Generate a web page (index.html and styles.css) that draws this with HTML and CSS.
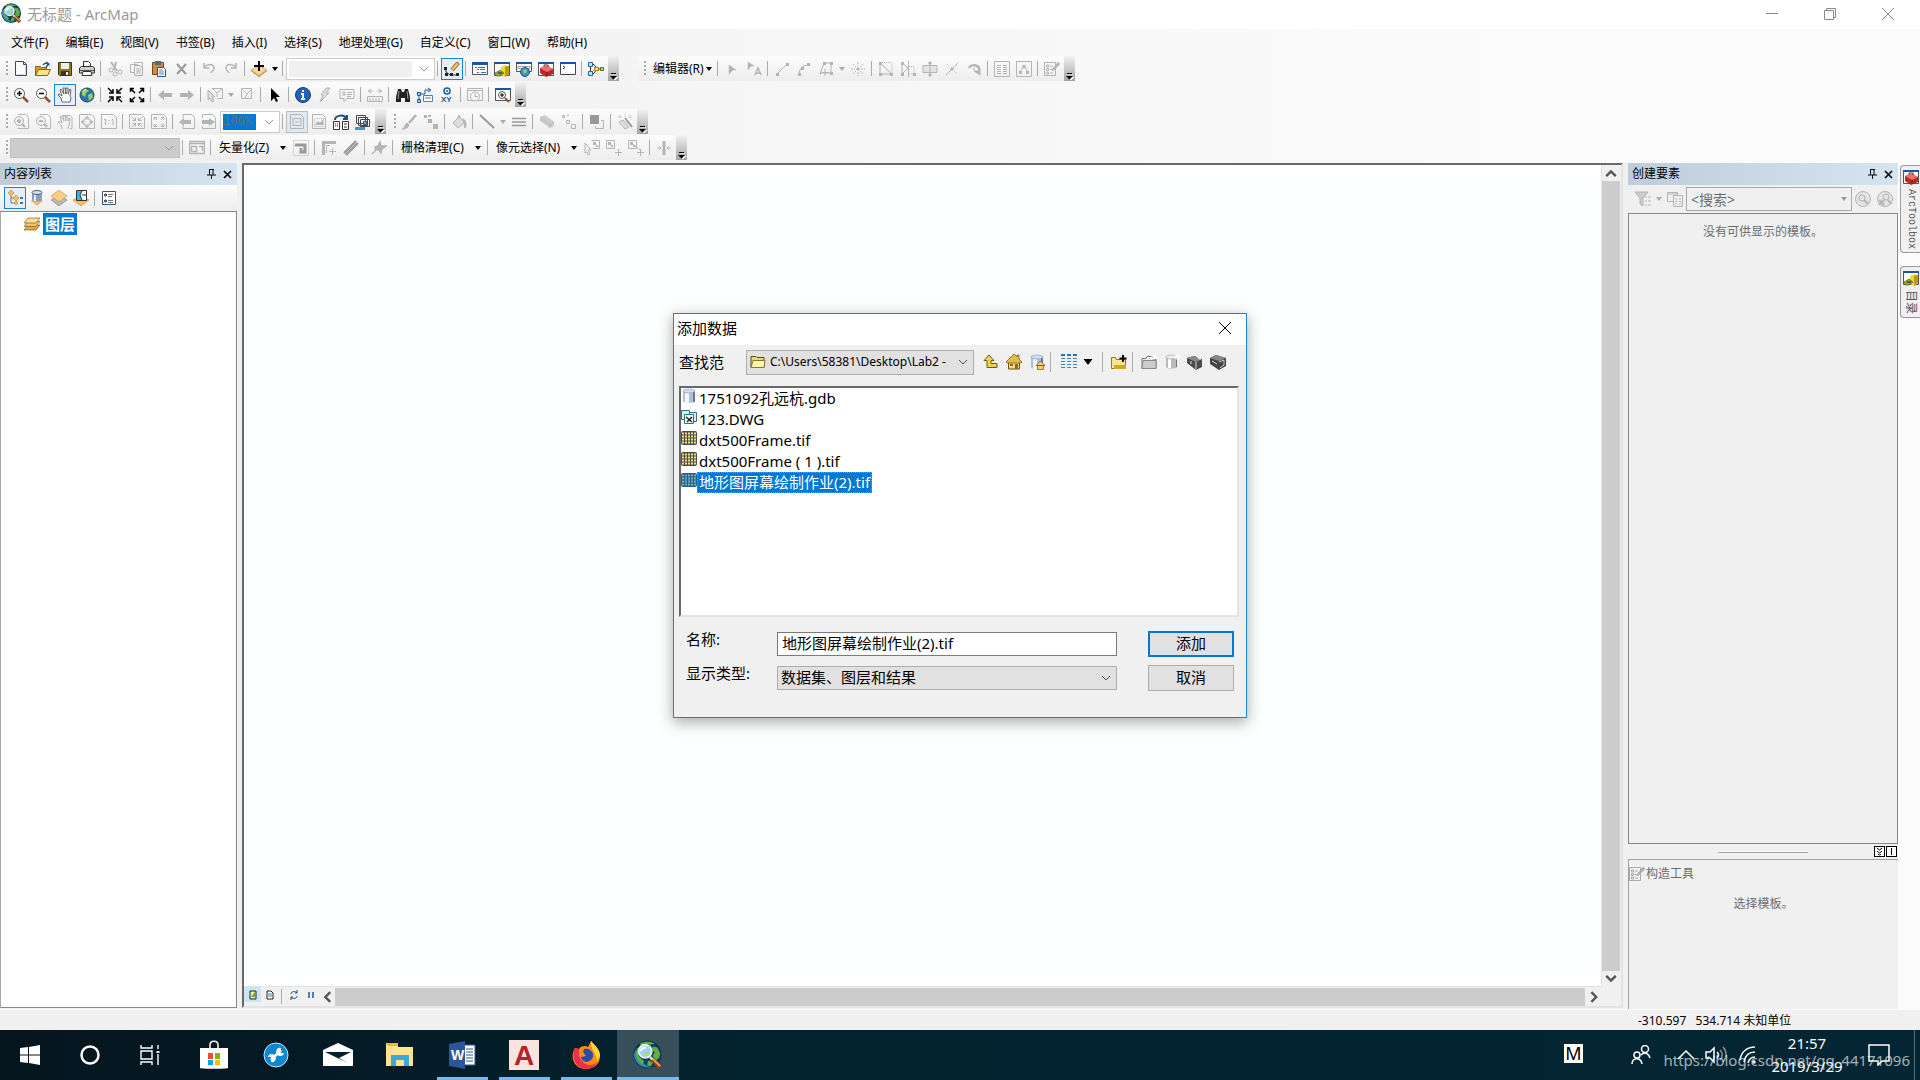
FILE: index.html
```html
<!DOCTYPE html>
<html lang="zh-CN">
<head>
  <meta charset="UTF-8" />
  <meta name="viewport" content="width=device-width, initial-scale=1.0">
  <title>无标题 - ArcMap</title>
  <link rel="stylesheet" href="styles.css">
</head>
<body>
  <!-- 共用图标 -->
  <svg class="defs" width="0" height="0">
    <symbol id="i-arcmap" viewBox="0 0 32 32">
      <circle cx="15.500" cy="15.500" r="15" fill="#123a58"/>
      <path d="M3 10c2 10 8 17 17 19C9 31 1 24 1 15z" fill="#2a86bf"/>
      <path d="M7 4c5-3 12-3 16 0l-4 1-6-1-4 2zM21 7l5 1 3 6-1 5-4 3-3-5 2-4-3-3zM4 9l3-1-1 9 6 6-2 3c-4-2-7-7-7-12zM16 22l6 1-3 5-4-1z" fill="#5fae45"/>
      <circle cx="13" cy="12" r="7" fill="#9cd3ee" stroke="#e9eef0" stroke-width="2"/>
      <path d="M12 14l5-3 1 4-4 3z" fill="#a6d982"/>
      <path d="M8 12c1-3 3-4 6-4" stroke="#fff" stroke-width="2"/>
      <path d="M18 18l4 4" stroke="#d9d9d9" stroke-width="3"/>
      <path d="M21 21l8 8" stroke="#8a3d17" stroke-width="5"/>
      <path d="M21 20l8 8" stroke="#ee9a5c" stroke-width="2"/>
    </symbol>
    <symbol id="i-drop" viewBox="0 0 8 8"><path d="M1 2h6L4 6z" fill="currentColor" stroke="none"/></symbol>
    <symbol id="i-chev" viewBox="0 0 10 10"><path d="M1 3l4 4 4-4" fill="none" stroke="currentColor"/></symbol>
    <symbol id="i-over" viewBox="0 0 11 24"><path d="M4 17.500h5M4 20h6l-3 3z" stroke="#fff" fill="#fff" stroke-width=".5"/><path d="M3 16.500h5" stroke="#000"/><path d="M2 19h7l-3.500 3.500z" fill="#000" stroke="none"/></symbol>
    <symbol id="i-toolbox" viewBox="0 0 16 16">
      <path d="M.5 1.500h15v13H.5z" fill="#fff" stroke="#555"/><path d="M0 1h16v2H0z" fill="#1d55a5"/>
      <path d="M2 7l7-2 6 3v5l-7 3-6-4z" fill="#b92a23"/><path d="M2 7l7-2 6 3-6 3z" fill="#ec7168"/><path d="M6 6V4l4 0v2M9 11v4" stroke="#7b1813" fill="none"/>
    </symbol>
    <symbol id="i-catalog" viewBox="0 0 16 16">
      <path d="M.5 1.500h15v13H.5z" fill="#fff" stroke="#555"/><path d="M0 1h16v2H0z" fill="#1d55a5"/>
      <path d="M7 6l4-2 4 1v8l-4 3-4-2z" fill="#f0d935"/><path d="M11 6l4-1v8l-4 3z" fill="#b99a14"/><path d="M1 12l5-3 4 3-4 3H2z" fill="#9aa424" stroke="#4f5712" stroke-width=".6"/><path d="M4 11h4v2H4z" fill="#39617e"/>
    </symbol>
    <symbol id="i-pin" viewBox="0 0 9 10"><path d="M2.500 0v5.500M2 .5h5M6 0v6M0 6h9M4.500 6v4" stroke="#000" fill="none"/></symbol>
    <symbol id="i-x" viewBox="0 0 9 9"><path d="M1 1l7 7M8 1L1 8" stroke="#000" stroke-width="1.600"/></symbol>
    <symbol id="i-form" viewBox="0 0 16 16"><path d="M.5 1.500h11v13H.5zM2.500 4h2v2h-2zM2.500 7.500h2v2h-2zM2.500 11h2v2h-2zM6 5h3M6 8.500h2M6 12h3"/><path d="M14 1l2 2-6 6-2 1 .500-2z" fill="currentColor" stroke-width=".5"/></symbol>
    <symbol id="i-raster" viewBox="0 0 16 16"><rect y="1" width="16" height="14" rx="2" fill="#4c4c4c"/><path d="M1 3.500h15M1 6.500h15M1 9.500h15M1 12.500h15" stroke="#efe07a" stroke-width="2" stroke-dasharray="2 1"/></symbol>
    <symbol id="i-cyl" viewBox="0 0 16 16"><path d="M2 3v10c0 2.500 12 2.500 12 0V3z" fill="#b5bfd2"/><path d="M4 5v9.500l4 .500V5z" fill="#f3f6fb"/><path d="M12 4v10.500l2-1V3z" fill="#66779a"/><ellipse cx="8" cy="3" rx="6" ry="2" fill="#cfdcf3" stroke="#8495b3" stroke-width=".6"/></symbol>
  </svg>

  <header class="titlebar">
    <svg class="app-icon"><use href="#i-arcmap"/></svg>
    <span class="title">无标题 - ArcMap</span>
    <button class="win-btn" aria-label="最小化"><svg viewBox="0 0 12 12"><path d="M0 5.500h12"/></svg></button>
    <button class="win-btn" aria-label="还原"><svg viewBox="0 0 12 12"><path d="M.5 2.500h9v9h-9zM2.500 2V.5h9v9H10"/></svg></button>
    <button class="win-btn" aria-label="关闭"><svg viewBox="0 0 12 12"><path d="M0 0l12 12M12 0L0 12"/></svg></button>
  </header>

  <div class="bars">
    <nav class="menu">
      <button>文件(F)</button><button>编辑(E)</button><button>视图(V)</button><button>书签(B)</button><button>插入(I)</button><button>选择(S)</button><button>地理处理(G)</button><button>自定义(C)</button><button>窗口(W)</button><button>帮助(H)</button>
    </nav>

    <!-- 标准工具条 / 编辑器 -->
    <div class="row">
      <div class="toolbar">
        <i class="grip"></i>
        <button class="tool" aria-label="新建"><svg viewBox="0 0 16 16"><path d="M2.500.5h8l3 3v11h-11z" fill="#fff" stroke="#3b4a60"/><path d="M10.500.5v3h3" stroke="#3b4a60"/><path d="M4 13.500h8.500V5" stroke="#c9d6ea"/></svg></button>
        <button class="tool" aria-label="打开"><svg viewBox="0 0 16 16"><path d="M.5 14.500v-9h5l1 1h5v8z" fill="#d99b2a" stroke="#8a6412"/><path d="M.5 14.500l3-6h12l-3 6z" fill="#fbe08d" stroke="#8a6412"/><path d="M8 4c1-2 3-2 5-1M11 1l3 2-3 3" stroke="#155b9c" stroke-width="1.500"/></svg></button>
        <button class="tool" aria-label="保存"><svg viewBox="0 0 16 16"><path d="M1.500 1.500h13v13h-12l-1-1z" fill="#8d7a1b" stroke="#3d350b"/><path d="M4 2h8v6H4z" fill="#eee"/><path d="M4 10h8v4H4z" fill="#333"/><path d="M9 11h2v3H9z" fill="#fff"/></svg></button>
        <button class="tool" aria-label="打印"><svg viewBox="0 0 16 16"><path d="M4.500 6V.5h5l2 2V6" fill="#fff" stroke="#333"/><path d="M.5 7l2-1.500h11l2 1.500v5H.5z" fill="#d0cfc3" stroke="#333"/><path d="M1 9.500h14" stroke="#555"/><path d="M4 10.500h8l1 4H3z" fill="#fff" stroke="#333"/></svg></button>
        <i class="sep"></i>
        <button class="tool" disabled aria-label="剪切"><svg viewBox="0 0 16 16"><path d="M4 1l6 9M9 1L7 9" stroke-width="2"/><circle cx="4" cy="9" r="2"/><circle cx="13" cy="11" r="2"/><circle cx="8" cy="13" r="2"/></svg></button>
        <button class="tool" disabled aria-label="复制"><svg viewBox="0 0 16 16"><path d="M5.500 11.500h-4v-8h7v2M5.500 3V1.500h8v10M5.500 4.500h6l2 3v7h-8zM7 8h5M7 10h5M7 12h5"/></svg></button>
        <button class="tool" aria-label="粘贴"><svg viewBox="0 0 16 16"><path d="M1.500 1.500h11v12h-11z" fill="#cb8a45" stroke="#7a4710"/><path d="M4 0h6v4H4z" fill="#666"/><path d="M6.500 6.500h6l2 2v7h-8z" fill="#fff" stroke="#294f84"/><path d="M8 9h4M8 11h5M8 13h5" stroke="#4e7fbd"/></svg></button>
        <button class="tool" disabled aria-label="删除"><svg viewBox="0 0 16 16"><path d="M4 3l9 10M13 3L4 13" stroke="#999" stroke-width="2"/></svg></button>
        <i class="sep"></i>
        <button class="tool" disabled aria-label="撤消"><svg viewBox="0 0 16 16"><path d="M3 2v5h5M3 7c2-4 10-5 10 0 0 3-3 4-3 5" stroke-width="1.500"/></svg></button>
        <button class="tool" disabled aria-label="恢复"><svg viewBox="0 0 16 16"><path d="M13 2v5H8M13 7c-2-4-10-5-10 0 0 3 3 4 3 5" stroke-width="1.500"/></svg></button>
        <i class="sep"></i>
        <button class="tool" aria-label="添加数据"><svg viewBox="0 0 16 16"><path d="M8 4l8 5-8 6-8-6z" fill="#fbd48b" stroke="#a87522" stroke-width=".5"/><path d="M0 9l8 6 8-6v1l-8 6-8-6z" fill="#b98433"/><path d="M8 0v10M3 5h10" stroke="#000" stroke-width="2"/></svg></button>
        <svg class="drop"><use href="#i-drop"/></svg>
        <i class="sep"></i>
        <span class="combo scale"><select aria-label="比例尺" disabled><option></option></select><svg><use href="#i-chev"/></svg></span>
        <i class="sep"></i>
        <button class="tool on" aria-label="编辑器工具条"><svg viewBox="0 0 16 16"><path d="M2 8v3l4 3h9" stroke="#333"/><path d="M0 6h3v3H0zM1 12h3v3H1zM6 12h3v3H6zM12 12h3v3h-3z" fill="#222"/><path d="M8 9l6-7" stroke="#8a5a12" stroke-width="4"/><path d="M8 9l6-7" stroke="#f5c561" stroke-width="2.500"/><path d="M13 1l2 2" stroke="#c58a80" stroke-width="2"/></svg></button>
        <i class="sep"></i>
        <button class="tool" aria-label="内容列表"><svg viewBox="0 0 16 16"><path d="M.5 2.500h15v11H.5z" fill="#fff" stroke="#555"/><path d="M0 1h16v3H0z" fill="#1d55a5"/><path d="M3 6.500h2M6 6.500h7M8 8.500h5M5 11.500h2M9 11.500h5" stroke="#2f77b8"/><path d="M5 8.500h2" stroke="#c33"/></svg></button>
        <button class="tool" aria-label="目录"><svg><use href="#i-catalog"/></svg></button>
        <button class="tool" aria-label="搜索"><svg viewBox="0 0 16 16"><path d="M.5 1.500h15v9H.5z" fill="#fff" stroke="#555"/><path d="M0 1h16v2H0z" fill="#1d55a5"/><path d="M2 5.500h12v2H2z" stroke="#999"/><circle cx="9" cy="11" r="4.500" fill="#3d8cc6" stroke="#235a88"/><path d="M7 9l3-1 1 3-3 2z" fill="#8fce6a"/></svg></button>
        <button class="tool" aria-label="ArcToolbox"><svg><use href="#i-toolbox"/></svg></button>
        <button class="tool" aria-label="Python"><svg viewBox="0 0 16 16"><path d="M.5 1.500h15v12H.5z" fill="#fff" stroke="#444"/><path d="M0 1h16v2H0z" fill="#1d55a5"/><path d="M3 5l2 1.500L3 8" stroke="#333"/></svg></button>
        <i class="sep"></i>
        <button class="tool" aria-label="模型构建器"><svg viewBox="0 0 16 16"><path d="M2.500 5v6M4 3.500h2l3 4.500-3 4.500H4M9 8h4" stroke="#333"/><path d="M.5 1.500h4v4h-4zM.5 10.500h4v4h-4z" fill="#bfe1f6" stroke="#1b64a6"/><path d="M6.500 6.500h4v3h-4z" fill="#fbdc6c" stroke="#a67b10"/><path d="M12.500 6.500h3v3h-3z" fill="#b1dc92" stroke="#3e7d2b"/></svg></button>
        <button class="over" aria-label="更多"><svg><use href="#i-over"/></svg></button>
      </div>

      <div class="toolbar apart">
        <i class="grip"></i>
        <button class="text-tool tight">编辑器(R)<svg class="drop"><use href="#i-drop"/></svg></button>
        <i class="sep"></i>
        <button class="tool" disabled aria-label="编辑工具"><svg viewBox="0 0 16 16"><path d="M5 4l7 5H9l-4 4z" fill="currentColor" stroke-width=".5"/></svg></button>
        <button class="tool" disabled aria-label="编辑注记"><svg viewBox="0 0 16 16"><path d="M2 1l6 4H5L2 9z" fill="currentColor" stroke-width=".5"/><path d="M9 14l3-7 3 7M10 12h4" stroke-width="1.500"/></svg></button>
        <i class="sep"></i>
        <button class="tool" disabled aria-label="直线段"><svg viewBox="0 0 16 16"><path d="M3 13L13 3"/><path d="M2 12h3v3H2zM12 2h3v3h-3z" fill="currentColor" stroke="none"/></svg></button>
        <button class="tool" disabled aria-label="弧段"><svg viewBox="0 0 16 16"><path d="M3 13c0-5 4-9 10-9"/><path d="M2 12h3v3H2zM11 2h3v3h-3zM5 6h3v3H5z" fill="currentColor" stroke="none"/></svg></button>
        <button class="tool" disabled aria-label="追踪"><svg viewBox="0 0 16 16"><path d="M2 13L6 2h7v10H2M7 8v7M4 11.500h7"/><path d="M5 1h3v3H5zM12 1h3v3h-3zM12 11h3v3h-3z" fill="currentColor" stroke="none"/></svg></button>
        <svg class="drop dim"><use href="#i-drop"/></svg>
        <button class="tool" disabled aria-label="点"><svg viewBox="0 0 16 16"><path d="M8 1v4M8 11v4M1 8h4M11 8h4M3 3l3 3M10 10l3 3M13 3l-3 3M6 10l-3 3" stroke-dasharray="2 1"/><path d="M7 7h2v2H7z" fill="currentColor"/></svg></button>
        <i class="sep"></i>
        <button class="tool" disabled aria-label="编辑折点"><svg viewBox="0 0 16 16"><path d="M2 2v11h12L2 2"/><path d="M2 1.500h12V13" stroke-dasharray="1 1"/><path d="M1 1h3v3H1zM12 12h3v3h-3zM1 12h3v3H1z" fill="currentColor" stroke="none"/></svg></button>
        <button class="tool" disabled aria-label="整形"><svg viewBox="0 0 16 16"><path d="M2 2v11l6-6-6-5M8.500 0v16"/><path d="M9 5.500h5V13H9" stroke-dasharray="1 1"/><path d="M1 1h3v3H1zM1 12h3v3H1zM13 12h3v3h-3z" fill="currentColor" stroke="none"/></svg></button>
        <button class="tool" disabled aria-label="裁剪面"><svg viewBox="0 0 16 16"><path d="M1 4.500h14v7H1z" fill="#e4e4e4"/><path d="M8 1v14"/><path d="M7 1h2v2H7zM7 13h2v2H7z" fill="currentColor"/></svg></button>
        <button class="tool" disabled aria-label="分割"><svg viewBox="0 0 16 16"><path d="M2 14L14 2"/><path d="M3 3l3 3M10 10l3 3" stroke-dasharray="1 1"/><path d="M7 7h2v2H7z" fill="currentColor"/></svg></button>
        <button class="tool" disabled aria-label="旋转"><svg viewBox="0 0 16 16"><path d="M3 7a5 4 0 1 1 10 3" stroke-width="2.500"/><path d="M8 10h6v4z" fill="currentColor"/><circle cx="8" cy="8" r=".500"/></svg></button>
        <i class="sep"></i>
        <button class="tool" disabled aria-label="属性"><svg viewBox="0 0 16 16"><path d="M.5.5h15v15H.5zM3 4.500h4M9 4.500h4M3 6.500h4M9 6.500h4M3 8.500h4M9 8.500h4M3 10.500h4M9 10.500h4M3 12.500h4M9 12.500h4"/></svg></button>
        <button class="tool" disabled aria-label="草图属性"><svg viewBox="0 0 16 16"><path d="M.5.5h15v15H.5zM4 11l4-6 4 6" /><path d="M6.500 4h3v3h-3zM3 10h3v3H3zM10 10h3v3h-3z" fill="currentColor" stroke="none"/></svg></button>
        <i class="sep"></i>
        <button class="tool" disabled aria-label="创建要素"><svg><use href="#i-form"/></svg></button>
        <button class="over" aria-label="更多"><svg><use href="#i-over"/></svg></button>
      </div>
    </div>

    <!-- 工具 -->
    <div class="row">
      <div class="toolbar">
        <i class="grip"></i>
        <button class="tool" aria-label="放大"><svg viewBox="0 0 16 16"><circle cx="6.500" cy="6.500" r="5" fill="#fff" stroke="#555"/><path d="M4 6.500h5M6.500 4v5" stroke="#000" stroke-width="1.500"/><path d="M10 10l5 5" stroke="#935038" stroke-width="2.500"/></svg></button>
        <button class="tool" aria-label="缩小"><svg viewBox="0 0 16 16"><circle cx="6.500" cy="6.500" r="5" fill="#fff" stroke="#555"/><path d="M4 6.500h5" stroke="#000" stroke-width="1.500"/><path d="M10 10l5 5" stroke="#935038" stroke-width="2.500"/></svg></button>
        <button class="tool on" aria-label="平移"><svg viewBox="0 0 16 16"><path d="M5 15l-1-4-3-3 1-1 3 2-2-6 1-1 3 5-1-6h2l1 6V1h2l0 6 2-5 1 1-1 6 1 2-1 4z" fill="#fff" stroke="#444" stroke-width=".8"/></svg></button>
        <button class="tool" aria-label="全图"><svg viewBox="0 0 16 16"><circle cx="8" cy="8" r="7" fill="#2676b2" stroke="#26465e"/><path d="M3 4l4-2 3 2-3 2-1 4-3-2zM9 8l4-2 1 4-4 4z" fill="#9dcf62"/><path d="M4 4l3-2" stroke="#fff"/></svg></button>
        <i class="sep"></i>
        <button class="tool" aria-label="固定比例放大"><svg class="ink" viewBox="0 0 16 16"><path d="M1 1l4 4M6 2v4H2M15 1l-4 4M10 2v4h4M1 15l4-4M2 10h4v4M15 15l-4-4M14 10h-4v4" stroke-width="1.500"/></svg></button>
        <button class="tool" aria-label="固定比例缩小"><svg class="ink" viewBox="0 0 16 16"><path d="M2 2l4 4M1.500 5V1.500H5M14 2l-4 4M11 1.500h3.500V5M2 14l4-4M1.500 11v3.500H5M14 14l-4-4M11 14.500h3.500V11" stroke-width="1.500"/></svg></button>
        <i class="sep"></i>
        <button class="tool" disabled aria-label="上一视图"><svg viewBox="0 0 16 16"><path d="M1 8l6-5v3h8v4H7v3z" fill="currentColor" stroke="none"/></svg></button>
        <button class="tool" disabled aria-label="下一视图"><svg viewBox="0 0 16 16"><path d="M15 8L9 3v3H1v4h8v3z" fill="currentColor" stroke="none"/></svg></button>
        <i class="sep"></i>
        <button class="tool" disabled aria-label="选择要素"><svg viewBox="0 0 16 16"><path d="M4.500 1.500h11v10h-5M6 2l4 4 5-4M10 6v4"/><path d="M1 3l7 7H5l2 4-2 1-2-4-2 2z" fill="#ddd"/></svg></button>
        <svg class="drop dim"><use href="#i-drop"/></svg>
        <button class="tool" disabled aria-label="清除选择"><svg viewBox="0 0 16 16"><path d="M2.500 1.500h10v10h-10zM4 3l4 4 4-4M8 7l-2 4"/></svg></button>
        <i class="sep"></i>
        <button class="tool" aria-label="选择元素"><svg viewBox="0 0 16 16"><path d="M4 1l9 9H9l2 4-2 1-2-4-3 3z" fill="#000"/></svg></button>
        <i class="sep"></i>
        <button class="tool" aria-label="识别"><svg viewBox="0 0 16 16"><circle cx="8" cy="8" r="7.500" fill="#2262b1" stroke="#123f80"/><path d="M8 3v2M6 7h2v5M6 12h4" stroke="#fff" stroke-width="1.800"/></svg></button>
        <button class="tool" disabled aria-label="超链接"><svg viewBox="0 0 16 16"><path d="M9 1h4l-4 5h3L3 15l3-7H4z" fill="#ddd"/></svg></button>
        <button class="tool" disabled aria-label="HTML弹出窗口"><svg viewBox="0 0 16 16"><path d="M1 2.500h14v9H8l-3 3v-3H1zM4 5h2v3H4zM8 5.500h5M8 7.500h5M8 9.500h4"/></svg></button>
        <i class="sep"></i>
        <button class="tool" disabled aria-label="测量"><svg viewBox="0 0 16 16"><path d="M.5 9.500h15v5H.5zM3 11v3M6 11v3M9 11v3M12 11v3M1 4h5M4 2L1.500 4 4 6M10 4h5M12 2l2.500 2L12 6"/></svg></button>
        <i class="sep"></i>
        <button class="tool" aria-label="查找"><svg viewBox="0 0 16 16"><path d="M3 2h3l1 3h2l1-3h3l2 8v5h-5v-4H6v4H1v-5z" fill="#222"/><path d="M4 4L3 12M12 4l1 8" stroke="#999"/></svg></button>
        <button class="tool" aria-label="查找路径"><svg viewBox="0 0 16 16"><path d="M2 13V7h6V3h5M11 1l3 2-3 2" stroke="#185f9c"/><path d="M.5 12.500h3v3h-3zM.5 5.500h3v3h-3z" fill="#9ecce8" stroke="#185f9c"/><path d="M6.500 8.500h9v6h-9zM8 11h6" fill="#fff" stroke="#57829e"/></svg></button>
        <button class="tool" aria-label="转到XY"><svg viewBox="0 0 16 16"><circle cx="8" cy="4" r="3" stroke="#185f9c" stroke-width="1.500"/><circle cx="8" cy="4" r="1" fill="#185f9c"/><text x="2" y="15" class="xy">XY</text></svg></button>
        <i class="sep"></i>
        <button class="tool" disabled aria-label="时间滑块"><svg viewBox="0 0 16 16"><path d="M.5 1.500h15v12H.5zM1 3.500h14"/><circle cx="8" cy="9.500" r="4.500" fill="#f4f4f4"/><path d="M8 6.500v3h3"/></svg></button>
        <i class="sep"></i>
        <button class="tool" aria-label="创建查看器窗口"><svg viewBox="0 0 16 16"><path d="M.5 1.500h15v12H.5z" fill="#fff" stroke="#555"/><path d="M0 1h16v2H0z" fill="#1d55a5"/><circle cx="7" cy="8" r="3.500" fill="#fff" stroke="#555"/><path d="M5 8h4M7 6v4" stroke="#000"/><path d="M10 11l4 4" stroke="#935038" stroke-width="2"/></svg></button>
        <button class="over" aria-label="更多"><svg><use href="#i-over"/></svg></button>
      </div>
    </div>

    <!-- 布局 / 栅格绘画 -->
    <div class="row">
      <div class="toolbar">
        <i class="grip"></i>
        <button class="tool" disabled aria-label="布局放大"><svg viewBox="0 0 16 16"><path d="M5 .5h8l2.500 3v11H5"/><circle cx="6" cy="7" r="4.500" fill="#eee"/><path d="M4 7h4M6 5v4M9 10l3 3" stroke-width="2"/></svg></button>
        <button class="tool" disabled aria-label="布局缩小"><svg viewBox="0 0 16 16"><path d="M5 .5h8l2.500 3v11H5"/><circle cx="6" cy="7" r="4.500" fill="#eee"/><path d="M4 7h4M9 10l3 3" stroke-width="2"/></svg></button>
        <button class="tool" disabled aria-label="布局平移"><svg viewBox="0 0 16 16"><path d="M5 1.500h8l2 2v11h-2M5 15l-1-4-3-3 1-1 3 2-2-6 1-1 3 5-1-5h2l1 5V3h2v4l2-3-1 7-1 4"/></svg></button>
        <button class="tool" disabled aria-label="缩放整个页面"><svg viewBox="0 0 16 16"><path d="M.5.5h12l3 3v11H.5zM5 5h6v6H5z"/><path d="M8 2l2 2H6zM8 14l2-2H6zM2 8l2-2v4zM14 8l-2-2v4z" fill="currentColor" stroke-width=".5"/></svg></button>
        <button class="tool" disabled aria-label="缩放至100%"><svg viewBox="0 0 16 16"><path d="M.5.5h12l3 3v11H.5zM3 6l1.500-1v6M8 6v1M8 9v1M10.500 6l1.500-1v6"/></svg></button>
        <i class="sep"></i>
        <button class="tool" disabled aria-label="布局固定放大"><svg viewBox="0 0 16 16"><path d="M.5.5h12l3 3v11H.5zM3 3l4 4M6.500 3.500v3h-3M13 3L9 7M9.500 3.500v3h3M3 13l4-4M3.500 9.500h3v3M13 13L9 9M12.500 9.500h-3v3"/></svg></button>
        <button class="tool" disabled aria-label="布局固定缩小"><svg viewBox="0 0 16 16"><path d="M.5.5h12l3 3v11H.5zM3 6V3.500h3M3 3l3 3M13 6V3.500h-3M13 3l-3 3M3 10v2.500h3M3 13l3-3M13 10v2.500h-3M13 13l-3-3"/></svg></button>
        <i class="sep"></i>
        <button class="tool" disabled aria-label="后退"><svg viewBox="0 0 16 16"><path d="M4 4V.5h9l2.500 3v11H4V12"/><path d="M0 8l5-4v2h7v4H5v2z" fill="currentColor" stroke="none"/></svg></button>
        <button class="tool" disabled aria-label="前进"><svg viewBox="0 0 16 16"><path d="M1.500 4V.5h10l3 3v11h-13V12"/><path d="M14 8L8 4v2H1v4h7v2z" fill="currentColor" stroke="none"/></svg></button>
        <span class="combo percent"><input type="text" value="100%" aria-label="缩放比例"><svg><use href="#i-chev"/></svg></span>
        <i class="sep"></i>
        <button class="tool pressed" disabled aria-label="切换描绘模式"><svg viewBox="0 0 16 16"><path d="M1.500.5h10l3 3v11h-13zM4 4.500h8v7H4zM6 8h4"/></svg></button>
        <button class="tool" disabled aria-label="焦点数据框"><svg viewBox="0 0 16 16"><path d="M1.500.5h10l3 3v11h-13z"/><path d="M3.500 4.500h9v8h-9z" stroke-dasharray="1 1"/><path d="M4 11l3-4 2 2 3-4v6z" fill="currentColor" stroke="none"/></svg></button>
        <button class="tool" aria-label="更改布局"><svg viewBox="0 0 16 16"><path d="M2 6c0-5 9-6 11-2M14 1v4h-4" stroke="#1d4f80" stroke-width="2"/><path d="M.5 7.500h6v8h-6zM9.500 7.500h6v8h-6z" fill="#fff" stroke="#333"/><path d="M2 10h1M4 10h1M2 12h1M4 12h1M11 10h3M11 13h3" stroke="#333"/></svg></button>
        <button class="tool" aria-label="数据驱动页面"><svg viewBox="0 0 16 16"><path d="M1.500 1.500h9v8h-9zM3.500 3.500h9v8h-9zM5.500 5.500h9v7h-9z" fill="#fff" stroke="#444"/><path d="M8.500 7.500h3v3h-3z" fill="#7bb86b" stroke="#27608c"/><path d="M0 13h10v3H0z" fill="#4a91c5"/></svg></button>
        <button class="over" aria-label="更多"><svg><use href="#i-over"/></svg></button>
      </div>
      <div class="toolbar next">
        <i class="grip"></i>
        <button class="tool" disabled aria-label="画笔"><svg viewBox="0 0 16 16"><path d="M15 1L8 9" stroke-width="2.500"/><path d="M1 15c3 0 2-4 5-6l2 2c-1 3-4 4-7 4z" fill="currentColor"/></svg></button>
        <button class="tool" disabled aria-label="像元"><svg viewBox="0 0 16 16"><path d="M1 1h3v3H1zM5 5h4v4H5zM10 10h5v5h-5zM5 1h3v2H5z" fill="currentColor" stroke="none"/></svg></button>
        <i class="sep"></i>
        <button class="tool" disabled aria-label="填充"><svg viewBox="0 0 16 16"><path d="M2 9l6-6 6 5-7 6z" fill="#ddd"/><path d="M6 5l2-4 2 4"/><path d="M12 5c3 1 4 6 2 9l-1-5z" fill="currentColor"/></svg></button>
        <i class="sep"></i>
        <button class="tool" disabled aria-label="线"><svg viewBox="0 0 16 16"><path d="M1 1l14 13" stroke="#999" stroke-width="2"/></svg></button>
        <svg class="drop dim"><use href="#i-drop"/></svg>
        <button class="tool" disabled aria-label="线宽"><svg viewBox="0 0 16 16"><path d="M1 4.500h14M1 11.500h14M1 8h14" stroke="#999" stroke-width="1.500"/></svg></button>
        <i class="sep"></i>
        <button class="tool" disabled aria-label="橡皮擦"><svg viewBox="0 0 16 16"><path d="M1 3l5-2 9 7v4l-4 2-10-7z" fill="#ccc" stroke="none"/><path d="M1 3l10 8 4-3M11 11v3" stroke-width=".7"/></svg></button>
        <button class="tool" disabled aria-label="擦除像元"><svg viewBox="0 0 16 16"><path d="M1.500 1.500h2v2h-2zM5.500 6.500h3v3h-3zM10.500 10.500h4v4h-4zM6 1.500h2"/></svg></button>
        <i class="sep"></i>
        <button class="tool" disabled aria-label="交换"><svg viewBox="0 0 16 16"><path d="M1 1h9v9H1z" fill="#999" stroke="none"/><path d="M12 6.500h2.500v8h-8V12"/></svg></button>
        <i class="sep"></i>
        <button class="tool" disabled aria-label="魔术擦除"><svg viewBox="0 0 16 16"><path d="M8 4l7 9" stroke="#999" stroke-width="2"/><path d="M2 8l4-2 6 7-4 2z" fill="#ddd"/><path d="M3 1v4M1 3h4M8 0v3M13 1v4M11 3h4" stroke-dasharray="1 1"/></svg></button>
        <button class="over" aria-label="更多"><svg><use href="#i-over"/></svg></button>
      </div>
    </div>

    <!-- ArcScan -->
    <div class="row">
      <div class="toolbar">
        <i class="grip"></i>
        <span class="combo raster"><select aria-label="栅格图层" disabled><option></option></select><svg><use href="#i-chev"/></svg></span>
        <i class="sep"></i>
        <button class="tool" disabled aria-label="栅格快照"><svg viewBox="0 0 16 16"><path d="M.5 1.500h15v12H.5zM1 3.500h14M2.500 6.500h5v5h-5zM10 6.500h3.500V11" stroke-width="1.500"/></svg></button>
        <i class="sep"></i>
        <button class="text-tool">矢量化(Z)<svg class="drop"><use href="#i-drop"/></svg></button>
        <button class="tool" disabled aria-label="生成要素"><svg viewBox="0 0 16 16"><path d="M.5.5h15v15H.5z" stroke-dasharray="1 1"/><path d="M2 5h10v7H8V8" stroke="#999" stroke-width="3"/></svg></button>
        <i class="sep"></i>
        <button class="tool" disabled aria-label="矢量化追踪"><svg viewBox="0 0 16 16"><path d="M2.500 15V2.500H15" stroke-width="3"/><path d="M5.500 13V5.500H9M8 11.500h7M11.500 8v7"/></svg></button>
        <button class="tool" disabled aria-label="点间追踪"><svg viewBox="0 0 16 16"><path d="M2 14L14 2" stroke="#999" stroke-width="5"/><path d="M2 14L14 2" stroke="#ccc"/></svg></button>
        <i class="sep"></i>
        <button class="tool" disabled aria-label="形状识别"><svg viewBox="0 0 16 16"><path d="M1 14l5-5M4 7l3-1 2-4 1 4 5 0-4 3-1 4-2-3-4-1z" fill="currentColor" stroke-width="1.500"/></svg></button>
        <i class="sep"></i>
        <button class="text-tool">栅格清理(C)<svg class="drop"><use href="#i-drop"/></svg></button>
        <i class="sep"></i>
        <button class="text-tool">像元选择(N)<svg class="drop"><use href="#i-drop"/></svg></button>
        <button class="tool" disabled aria-label="选择相连像元"><svg viewBox="0 0 16 16"><path d="M7.500.5h8v8H9M1 3l6 7H4l2 4-2 1-1-3-2 1z"/><path d="M9 2h3v3H9zM12 5h2v2h-2z" fill="currentColor" stroke="none"/></svg></button>
        <button class="tool" disabled aria-label="添加像元"><svg viewBox="0 0 16 16"><path d="M.5.5h8v8h-8zM12.500 9v7M9 12.500h7"/><path d="M2 2h3v3H2zM5 5h2v2H5z" fill="currentColor" stroke="none"/></svg></button>
        <button class="tool" disabled aria-label="线选像元"><svg viewBox="0 0 16 16"><path d="M.5.5h8v8h-8zM12.500 9v7M9 12.500h7M2 2l11 9"/><path d="M2 2h3v3H2zM5 5h2v2H5z" fill="currentColor" stroke="none"/></svg></button>
        <i class="sep"></i>
        <button class="tool" disabled aria-label="栅格线宽"><svg viewBox="0 0 16 16"><path d="M8 1v14" stroke-width="3"/><path d="M1 8h4M3 6l2 2-2 2M15 8h-4M13 6l-2 2 2 2"/></svg></button>
        <button class="over" aria-label="更多"><svg><use href="#i-over"/></svg></button>
      </div>
    </div>
  </div>

  <main class="work">
    <!-- 内容列表 -->
    <section class="toc">
      <h2 class="dock-head">内容列表<svg class="pin"><use href="#i-pin"/></svg><svg class="close"><use href="#i-x"/></svg></h2>
      <div class="dock-tools">
        <button class="tool on" aria-label="按绘制顺序列出"><svg viewBox="0 0 16 16"><path d="M4 6v7h4M4 8h5" stroke="#777"/><path d="M4 0l3 3-3 3-3-3zM9 5l3 3-3 3-3-3zM9 11l2 2-2 2-2-2z" fill="#f3bc64" stroke="#b9802c" stroke-width=".6"/><path d="M13 8h3M13 13h3" stroke="#246" stroke-width="1.500"/></svg></button>
        <button class="tool" aria-label="按源列出"><svg viewBox="0 0 16 16"><path d="M8 7l6 4-6 5-6-5z" fill="#f3bc64"/><path d="M3 2v8c0 2 10 2 10 0V2z" fill="#8fa0b8"/><ellipse cx="8" cy="2.500" rx="5" ry="2" fill="#d7e0ec" stroke="#4e617c"/><path d="M6 5v6" stroke="#e5ecf5" stroke-width="2"/></svg></button>
        <button class="tool" aria-label="按可见性列出"><svg viewBox="0 0 16 16"><path d="M8 5l8 5-8 6-8-6z" fill="#bbb" stroke="#666" stroke-width=".5"/><path d="M8 0l8 6-8 6-8-6z" fill="#f8cf85" stroke="#b9802c" stroke-width=".5"/></svg></button>
        <button class="tool" aria-label="按选择列出"><svg viewBox="0 0 16 16"><path d="M8 6l8 4-8 6-8-6z" fill="#f3bc64" stroke="#b9802c" stroke-width=".5"/><path d="M3.500.5h10v10h-10z" fill="#fff" stroke="#333"/><path d="M4 1h5l-2 4 2 5H4z" fill="#27bde3"/><path d="M9 1L7 5l2 5M9 5h4" stroke="#333"/></svg></button>
        <i class="sep"></i>
        <button class="tool" aria-label="选项"><svg viewBox="0 0 16 16"><path d="M1.500 1.500h13v13h-13z" fill="#fff" stroke="#3c5572"/><path d="M7 4.500h5M7 6.500h4M7 10.500h5M7 12.500h5" stroke="#777"/><circle cx="4.500" cy="5" r="1" stroke="#000"/><circle cx="4.500" cy="11" r="1" stroke="#000"/></svg></button>
      </div>
      <div class="tree">
        <svg viewBox="0 0 16 14"><path d="M4 8h12l-4 5H0z" fill="#e3a74c" stroke="#8a5c14" stroke-width=".7"/><path d="M4 4.500h12l-4 5H0z" fill="#f2c273" stroke="#8a5c14" stroke-width=".7"/><path d="M4 1h12l-4 5H0z" fill="#fbdca0" stroke="#8a5c14" stroke-width=".7"/></svg>
        <span class="node">图层</span>
      </div>
    </section>

    <!-- 地图窗口 -->
    <section class="map">
      <div class="canvas"></div>
      <div class="vbar">
        <svg viewBox="0 0 10 10"><path d="M2 7l3-3 3 3"/></svg>
        <i class="thumb"></i>
        <svg viewBox="0 0 10 10"><path d="M2 3l3 3 3-3"/></svg>
      </div>
      <div class="hbar">
        <button class="view on" aria-label="数据视图"><svg viewBox="0 0 8 10"><path d="M1 1h6v8H1z" fill="#e8eb9e" stroke="#222"/><path d="M2 7l4-5v5z" fill="#69a552"/></svg></button>
        <button class="view" aria-label="布局视图"><svg viewBox="0 0 8 10"><path d="M1 1h4l2 2v6H1z" fill="#fff" stroke="#222"/><path d="M2 4h4M2 6h4" stroke="#4379ab"/></svg></button>
        <i class="sep"></i>
        <button class="view" aria-label="刷新视图"><svg viewBox="0 0 8 10"><path d="M1 4c0-3 5-3 6-1M7 0v3H5M7 6c0 3-5 3-6 1M1 10V7h2" stroke="#1b4b80"/></svg></button>
        <button class="view" aria-label="暂停绘制"><svg viewBox="0 0 8 10"><path d="M2 2v6M6 2v6" stroke="#2356a0" stroke-width="1.500"/></svg></button>
        <svg class="arr" viewBox="0 0 10 10"><path d="M7 2L4 5l3 3"/></svg>
        <i class="thumb"></i>
        <svg class="arr" viewBox="0 0 10 10"><path d="M4 2l3 3-3 3"/></svg>
      </div>
    </section>

    <!-- 创建要素 -->
    <section class="create">
      <h2 class="dock-head">创建要素<svg class="pin"><use href="#i-pin"/></svg><svg class="close"><use href="#i-x"/></svg></h2>
      <div class="search-row">
        <button class="tool" disabled aria-label="过滤"><svg viewBox="0 0 16 16"><path d="M0 1h13L8 7v8l-3-2V7z" fill="#ccc"/><path d="M10 6h2M13 6h3M10 10h2M13 10h3M10 14h2M13 14h3"/></svg></button>
        <svg class="drop dim"><use href="#i-drop"/></svg>
        <button class="tool" disabled aria-label="组织模板"><svg viewBox="0 0 16 16"><path d="M.5 1.500h10v9H.5zM1 3h9" /><path d="M6.500 4.500h9v11h-9zM8 8h2M12 8h2M8 10.500h2M12 10.500h2M8 13h2M12 13h2" fill="#eee"/></svg></button>
        <span class="combo search"><input type="text" placeholder="&lt;搜索&gt;" aria-label="搜索"><svg class="drop"><use href="#i-drop"/></svg></span>
        <button class="tool" disabled aria-label="查找模板"><svg viewBox="0 0 16 16"><circle cx="8" cy="8" r="7.500" fill="#e3e3e3"/><circle cx="7" cy="7" r="3"/><path d="M9 9l4 4" stroke-width="2"/></svg></button>
        <button class="tool" disabled aria-label="清除查找"><svg viewBox="0 0 16 16"><circle cx="8" cy="8" r="7.500" fill="#e3e3e3"/><circle cx="9" cy="6" r="3"/><path d="M11 9l3 4M2 9l5 5M7 9l-5 5" stroke-width="2"/></svg></button>
      </div>
      <div class="templates">没有可供显示的模板。</div>
      <div class="splitter"><i class="line"></i>
        <button aria-label="折叠"><svg viewBox="0 0 9 9"><path d="M2 1l2.500 2L7 1M2 4l2.500 2L7 4M3 7l1.500 1L6 7"/></svg></button><button aria-label="还原"><svg viewBox="0 0 9 9"><path d="M4.500 1v7"/></svg></button>
      </div>
      <div class="construct">
        <h3><svg><use href="#i-form"/></svg>构造工具</h3>
        <p>选择模板。</p>
      </div>
    </section>

    <aside class="side-tabs">
      <button><svg><use href="#i-toolbox"/></svg><span class="latin">ArcToolbox</span></button>
      <button><svg><use href="#i-catalog"/></svg><span>目录</span></button>
    </aside>
  </main>

  <footer class="status"><span class="coords">-310.597&nbsp;&nbsp; 534.714 未知单位</span></footer>

  <!-- 任务栏 -->
  <nav class="taskbar">
    <button class="sys" aria-label="开始"><svg viewBox="0 0 20 20"><path d="M0 3l8-1v7.500H0zM9 2l11-2v9.500H9zM0 10.500h8V18l-8-1zM9 10.500h11V20L9 18z" fill="#fff"/></svg></button>
    <button class="sys" aria-label="Cortana"><svg viewBox="0 0 20 20"><circle cx="10" cy="10" r="8.500" stroke="#fff" stroke-width="2.500"/></svg></button>
    <button class="sys" aria-label="任务视图"><svg viewBox="0 0 20 20"><path d="M1 0v3h11V0M1 20v-3h11v3M1 6h11v8H1zM18 0v4M18 9v11" stroke="#fff" stroke-width="1.400"/><path d="M16.500 6h3v2h-3z" fill="#fff"/></svg></button>
    <div class="apps">
      <button aria-label="应用商店"><svg viewBox="0 0 30 30"><path d="M11 9V5c0-5 8-5 8 0v4" stroke="#fff" stroke-width="1.500"/><path d="M1 8h28v20c0 1-28 1-28 0z" fill="#fff"/><path d="M9 13h5v6H9z" fill="#f25022"/><path d="M16 13h5v6h-5z" fill="#7fba00"/><path d="M9 20h5v5H9z" fill="#00a4ef"/><path d="M16 20h5v5h-5z" fill="#ffb900"/></svg></button>
      <button aria-label="工具"><svg viewBox="0 0 30 30"><circle cx="15" cy="15" r="12" fill="#0c87d3" stroke="#cfe8f5"/><path d="M10 20l10-10" stroke="#fff" stroke-width="2.500"/><path d="M20 8a4 4 0 1 0 3 5l-3 0-1-2zM10 22a4 4 0 1 0-3-5l3 0 1 2z" fill="#fff"/></svg></button>
      <button aria-label="邮件"><svg viewBox="0 0 30 30"><path d="M0 10l15-7 15 7v16H0z" fill="#fff"/><path d="M2 12h26l-12 6 9 5L2 12z" fill="#061f2b"/></svg></button>
      <button aria-label="文件资源管理器"><svg viewBox="0 0 30 30"><path d="M1 3h12v4h15v19H1z" fill="#ffe391"/><path d="M1 3h12v3H3z" fill="#f3b72c"/><path d="M6 26V15h18v11h-5v-6h-8v6z" fill="#38a9dc"/></svg></button>
      <button class="open" aria-label="Word"><svg viewBox="0 0 30 30"><path d="M16 5h12v20H16z" fill="#fff" stroke="#2b579a"/><path d="M19 9h7M19 12h7M19 15h7M19 18h7M19 21h7" stroke="#2b579a"/><path d="M2 4l16-3v28L2 26z" fill="#2b579a"/><text x="4" y="20" class="w">W</text></svg></button>
      <button class="open" aria-label="AutoCAD"><svg viewBox="0 0 30 30"><path d="M0 0h30v30H0z" fill="#fbe4dd"/><text x="5" y="25" class="a">A</text></svg></button>
      <button class="open" aria-label="Firefox"><svg viewBox="0 0 30 30"><path d="M4 8l4 1c3-4 7-3 9-2l3-6c4 5 9 8 9 15 0 8-6 13-14 13C4 29-2 18 4 8z" fill="#ff8b16"/><path d="M4 8c-4 9 0 20 11 21 5 0 10-3 12-7-5 4-12 4-16-1-3-3-3-8-3-12z" fill="#ee2d4f"/><path d="M20 1c4 5 9 8 9 15l-3 5c0-8-7-11-6-20z" fill="#ffd93b"/><path d="M13 9c4-1 8 1 9 5 1 4-3 8-7 8-4-1-5-4-5-5l5-1-3-4z" fill="#2c4ba8"/></svg></button>
      <button class="open active" aria-label="ArcMap"><svg><use href="#i-arcmap"/></svg></button>
    </div>
    <div class="tray">
      <span class="ime">M</span>
      <svg class="people" viewBox="0 0 20 20"><circle cx="14" cy="4" r="3.500"/><circle cx="6" cy="10" r="3"/><path d="M1 19c0-7 9-7 10 0M10 10c4-4 8-1 9 3"/></svg>
      <svg class="up" viewBox="0 0 18 10"><path d="M1 9l8-8 8 8"/></svg>
      <svg class="vol" viewBox="0 0 22 18"><path d="M1 6h4l4-4v14l-4-4H1zM12 6c2 2 2 4 0 6"/><path d="M15 4c3 3 3 7 0 10M18 1c4 4 4 11 0 15" opacity=".5"/></svg>
      <svg class="wifi" viewBox="0 0 18 18"><path d="M1 14C2 6 8 1 16 1M5 16c1-6 5-10 11-10M9 17c1-4 3-6 7-6"/><circle cx="15" cy="16" r="1" fill="#fff"/></svg>
      <div class="clock"><span>21:57</span><span>2019/3/29</span></div>
      <svg class="note" viewBox="0 0 22 22"><path d="M1 1h20v16h-7l-4 4v-4H1z"/></svg>
      <i class="peek"></i>
    </div>
    <span class="watermark">https://blog.csdn.net/qq_44171096</span>
  </nav>

  <!-- 添加数据对话框 -->
  <div class="overlay">
    <form class="dialog">
      <header>添加数据<button type="button" aria-label="关闭"><svg viewBox="0 0 12 12"><path d="M0 0l12 12M12 0L0 12"/></svg></button></header>
      <div class="look">
        <label for="path">查找范</label>
        <span class="combo path"><svg class="folder" viewBox="0 0 16 14"><path d="M1 12.500V1.500h5l1 1h7v10z" fill="#ecd57a" stroke="#5d4b10"/><path d="M1 12.500l2-7h12l-1 7z" fill="#fff3b0" stroke="#8d7725"/></svg><select id="path"><option>C:\Users\58381\Desktop\Lab2 -</option></select><svg><use href="#i-chev"/></svg></span>
        <button type="button" class="dtool" aria-label="向上一级"><svg viewBox="0 0 16 16"><path d="M6 1L1 6.500h3v7h10v-4H8v-3h3z" fill="#ead254" stroke="#715d13"/></svg></button>
        <button type="button" class="dtool" aria-label="主目录"><svg viewBox="0 0 16 16"><path d="M2.500 8v7h11V8z" fill="#f2d97c" stroke="#6c500f"/><path d="M8 0L0 8l1 1h14l1-1-3-3V1h-2v2z" fill="#e0bc4d" stroke="#6c500f" stroke-width=".7"/><path d="M4 10h3v2H4zM9 10h3v5H9z" fill="#8d6a22"/></svg></button>
        <button type="button" class="dtool" aria-label="默认地理数据库"><svg viewBox="0 0 16 16"><use href="#i-cyl"/><path d="M7 11.500L11.500 7l4.500 4.500zM8.500 11.500h6v4h-6z" fill="#f0cf71" stroke="#725312" stroke-width=".7"/></svg></button>
        <i class="sep"></i>
        <button type="button" class="dtool wide" aria-label="列表"><svg viewBox="0 0 16 16"><path d="M0 1h16" stroke="#2f6fc0" stroke-width="2" stroke-dasharray="4 2"/><path d="M0 4.500h16M0 7.500h16M0 10.500h16M0 13.500h16" stroke="#3b89c7" stroke-dasharray="4 2"/></svg><svg class="drop"><use href="#i-drop"/></svg></button>
        <i class="sep"></i>
        <button type="button" class="dtool" aria-label="连接到文件夹"><svg viewBox="0 0 16 16"><path d="M.5 14.500V3.500h4l1 2h9v9z" fill="#f4e493" stroke="#8b7825"/><path d="M3 11h12v4H3z" fill="#c9a928"/><path d="M12 1v7M8.500 4.500h7" stroke="#000" stroke-width="2"/></svg></button>
        <i class="sep"></i>
        <button type="button" class="dtool" aria-label="新建文件夹"><svg viewBox="0 0 16 16"><path d="M1 14.500v-10h4l1-2h5l1 3h3v9z" fill="#eee" stroke="#777"/><path d="M1 14.500l1-8h13v8z" fill="#ccc" stroke="#888"/><path d="M13 0v6M10 3h6M11 1l4 4M15 1l-4 4" stroke="#fff"/></svg></button>
        <button type="button" class="dtool" aria-label="新建文件地理数据库"><svg viewBox="0 0 16 16"><path d="M2 3v10c0 2 11 2 11 0V3z" fill="#bbb"/><path d="M4 5v9h3V5z" fill="#fff"/><ellipse cx="7.500" cy="3" rx="5.500" ry="2" fill="#eee" stroke="#999" stroke-width=".6"/><path d="M12.500 4v9" stroke="#777"/><path d="M13 0v6M10 3h6M11 1l4 4M15 1l-4 4" stroke="#fff"/></svg></button>
        <button type="button" class="dtool" aria-label="新建工具箱"><svg viewBox="0 0 16 16"><path d="M0 4l7-2 8 3v8l-6 3-9-7z" fill="#4a4a4a"/><path d="M0 4l7-2 8 3-6 3z" fill="#8a8a8a"/><path d="M9 8v7M4 7v3" stroke="#ddd"/><path d="M13 0v6M10 3h6M11 1l4 4M15 1l-4 4" stroke="#fff"/></svg></button>
        <button type="button" class="dtool" aria-label="工具箱"><svg viewBox="0 0 16 16"><path d="M0 4l6-3 10 3v8l-7 4-9-6z" fill="#444"/><path d="M0 4l6-3 10 3-7 3z" fill="#888"/><path d="M9 8l5-2v5l-4 3M2 7l5 3" stroke="#ccc"/></svg></button>
      </div>
      <ul class="files">
        <li><svg><use href="#i-cyl"/></svg><span>1751092孔远杭.gdb</span></li>
        <li><svg viewBox="0 0 16 16"><path d="M.5 1.500h8v9h-8z" fill="#d9edf2" stroke="#35717d"/><path d="M8.500 3.500h7v9h-7z" fill="#d9edf2" stroke="#35717d"/><path d="M3.500 5.500h9v9h-9z" fill="#fff" stroke="#35717d"/><path d="M5 8l6 5M11 8l-5 5" stroke="#222" stroke-width="1.500"/></svg><span>123.DWG</span></li>
        <li><svg><use href="#i-raster"/></svg><span>dxt500Frame.tif</span></li>
        <li><svg><use href="#i-raster"/></svg><span>dxt500Frame ( 1 ).tif</span></li>
        <li class="selected"><svg viewBox="0 0 16 16"><rect y="1" width="16" height="14" rx="2" fill="#265f94"/><path d="M1 3.500h15M1 6.500h15M1 9.500h15M1 12.500h15" stroke="#77aca8" stroke-width="2" stroke-dasharray="2 1"/></svg><span>地形图屏幕绘制作业(2).tif</span></li>
      </ul>
      <div class="fields">
        <label for="name">名称:</label>
        <input type="text" id="name" value="地形图屏幕绘制作业(2).tif">
        <button type="submit" class="btn primary">添加</button>
        <label for="type">显示类型:</label>
        <span class="combo type"><select id="type"><option>数据集、图层和结果</option></select><svg><use href="#i-chev"/></svg></span>
        <button type="button" class="btn">取消</button>
      </div>
    </form>
  </div>
</body>
</html>
```
FILE: styles.css
```css
* {
  box-sizing: border-box;
}
body {
  margin: 0;
  height: 100vh;
  display: flex;
  flex-direction: column;
  overflow: hidden;
  font-family: "Noto Sans", "Noto Sans CJK SC", sans-serif;
  font-size: 12px;
  line-height: 16px;
  color: #000;
  background: #f0f0f0;
}
button, input, select {
  font: inherit;
  color: inherit;
  margin: 0;
  padding: 0;
  border: 0;
  background: none;
  border-radius: 0;
}
select {
  appearance: none;
  opacity: 1;
}
h2, h3, p, ul {
  margin: 0;
  padding: 0;
  font-size: 12px;
  font-weight: normal;
}
svg {
  display: block;
  flex: none;
  fill: none;
}
.defs {
  position: absolute;
}

/* 标题栏 */
.titlebar {
  display: flex;
  align-items: center;
  height: 29px;
  padding: 0 3px 2px 1px;
  background: #fff;
  color: #999;
}
.app-icon {
  width: 21px;
  height: 21px;
}
.title {
  flex: 1;
  padding-left: 5px;
  font-size: 15px;
  line-height: 20px;
}
.win-btn {
  width: 58px;
  height: 27px;
  display: grid;
  place-items: center;
}
.win-btn svg {
  width: 12px;
  height: 12px;
  stroke: #888;
}

/* 菜单和工具条 */
.bars {
  background: linear-gradient(90deg, #f0f0f0, #fbfbfb 80%);
}
.menu {
  display: flex;
  align-items: center;
  gap: 1px;
  height: 27px;
  padding-left: 3px;
}
.menu button {
  padding: 0 8px;
}
.row {
  display: flex;
  height: 26px;
}
.row:nth-child(odd) {
  height: 27px;
}
.row:last-child {
  height: 28px;
}
.toolbar {
  display: flex;
  align-items: center;
  height: 25px;
  padding-left: 3px;
  background: linear-gradient(#fcfcfc, #ededed);
}
.apart {
  margin-left: 19px;
}
.next {
  margin-left: 2px;
}
.grip {
  width: 7px;
  height: 16px;
  flex: none;
  background: repeating-linear-gradient(#aaa 0 2px, transparent 2px 4px) 3px 0 / 2px 100% no-repeat;
}
.sep {
  width: 6px;
  height: 15px;
  flex: none;
  background: linear-gradient(#aaa, #aaa) 2px 0 / 1px 100% no-repeat;
}
.tool {
  width: 22px;
  height: 22px;
  flex: none;
  display: grid;
  place-items: center;
}
.tool svg {
  width: 16px;
  height: 16px;
}
.tool:disabled {
  color: #b4b4b4;
}
.tool:disabled svg {
  stroke: currentColor;
}
.tool.on {
  border: 1px solid #1883d7;
  background: #e3eefa;
}
.tool.pressed {
  border: 1px solid #b5bdc5;
  background: #e0e8f0;
}
.ink {
  stroke: #000;
}
.xy {
  font: bold 8px "Liberation Sans", sans-serif;
  fill: #185f9c;
}
.drop {
  width: 8px;
  height: 8px;
  margin: 0 1px;
}
.dim {
  color: #aaa;
}
.text-tool {
  display: flex;
  align-items: center;
  gap: 9px;
  padding: 0 2px 0 5px;
}
.tight {
  gap: 0;
  padding-right: 1px;
}
.over {
  width: 11px;
  height: 25px;
  margin-left: 1px;
  background: linear-gradient(#f2f2f2, #a3a3a3);
}
.over svg {
  width: 11px;
  height: 24px;
}
.combo {
  position: relative;
  display: flex;
  align-items: center;
  flex: none;
}
.combo select {
  width: 100%;
  height: 100%;
}
.combo > svg:last-child {
  position: absolute;
  right: 5px;
  width: 10px;
  height: 10px;
  color: #555;
  pointer-events: none;
}
.scale {
  width: 149px;
  height: 22px;
  padding: 2px 22px 2px 2px;
  border: 1px solid #ccc;
  background: #fff;
}
.scale select {
  background: #f0f0f0;
}
.percent {
  width: 60px;
  height: 22px;
  padding-left: 2px;
  border: 1px solid #ccc;
  background: #fff;
}
.percent input {
  width: 33px;
  height: 16px;
  color: #6d6d6d;
  font-family: "Liberation Mono", monospace;
  background: #0078d7;
}
.raster {
  width: 170px;
  height: 20px;
  border: 1px solid #c0c0c0;
  background: #ccc;
}
.scale > svg:last-child, .raster > svg:last-child, .percent > svg:last-child {
  color: #999;
}

/* 工作区 */
.work {
  flex: 1;
  min-height: 0;
  display: flex;
}
.dock-head {
  display: flex;
  align-items: center;
  height: 22px;
  padding: 0 5px 0 4px;
  background: linear-gradient(90deg, #bfcddb, #d6e4f2);
}
.pin {
  width: 9px;
  height: 10px;
  margin: 0 7px 0 auto;
}
.close {
  width: 9px;
  height: 9px;
}
.toc {
  width: 237px;
  display: flex;
  flex-direction: column;
  padding-bottom: 1px;
}
.dock-tools {
  display: flex;
  align-items: center;
  height: 26px;
  padding-left: 4px;
  background: linear-gradient(#fcfcfc, #ededed);
}
.tree {
  flex: 1;
  display: flex;
  align-items: flex-start;
  gap: 3px;
  padding: 1px 0 0 23px;
  border: 1px solid #828790;
  border-left-color: #aaa;
  background: #fff;
}
.tree svg {
  width: 16px;
  height: 14px;
  margin-top: 4px;
}
.node {
  padding: 0 2px;
  font-size: 15px;
  font-weight: bold;
  line-height: 22px;
  color: #fff;
  background: #0078d7;
}
.map {
  flex: 1;
  min-width: 0;
  margin: 0 5px 1px;
  display: grid;
  grid-template: 1fr 19px / 1fr 19px;
  border: 2px solid #696969;
  border-right-color: #e3e3e3;
  border-bottom-color: #e3e3e3;
}
.canvas {
  background: #fdfffe;
  border-right: 1px solid #e3e3e3;
  border-bottom: 1px solid #e3e3e3;
}
.vbar {
  display: flex;
  flex-direction: column;
  align-items: center;
  padding-right: 1px;
}
.vbar svg, .arr {
  width: 16px;
  height: 16px;
  stroke: #555;
  stroke-width: 1.5;
}
.thumb {
  flex: 1;
  background: #cdcdcd;
}
.vbar .thumb {
  width: 18px;
}
.hbar {
  grid-column: 1 / 3;
  display: flex;
  align-items: center;
  padding-right: 20px;
}
.hbar .thumb {
  height: 18px;
}
.view {
  width: 17px;
  height: 15px;
  margin-bottom: 4px;
  display: grid;
  place-items: center;
}
.view.on {
  background: #cce4f7;
}
.view:nth-of-type(2) {
  margin-right: 1px;
}
.view svg {
  width: 8px;
  height: 10px;
}
.create {
  width: 270px;
  display: flex;
  flex-direction: column;
  color: #6d6d6d;
}
.create .dock-head {
  color: #000;
}
.search-row {
  display: flex;
  align-items: center;
  height: 28px;
  padding: 0 2px 0 4px;
}
.search {
  flex: 1;
  height: 24px;
  border: 1px solid #aaa;
}
.search input {
  width: 100%;
  height: 100%;
  padding-left: 4px;
  font-size: 14px;
}
.search input::placeholder {
  color: #6d6d6d;
}
.search > svg:last-child {
  right: 2px;
  width: 8px;
  height: 8px;
  color: #999;
}
.templates {
  flex: 1;
  padding: 10px 8px;
  border: 1px solid #828790;
  text-align: center;
}
.splitter {
  display: flex;
  align-items: center;
  height: 15px;
  padding-right: 1px;
  gap: 1px;
}
.line {
  width: 90px;
  height: 2px;
  margin: 0 65px 0 auto;
  border-top: 1px solid #fff;
  border-bottom: 1px solid #a0a0a0;
}
.splitter button {
  width: 11px;
  height: 11px;
  border: 1px solid #000;
  background: #fff;
}
.splitter svg {
  width: 9px;
  height: 9px;
  stroke: #000;
}
.construct {
  height: 150px;
  border-top: 1px solid #a0a0a0;
  border-left: 1px solid #a0a0a0;
}
.construct h3 {
  display: flex;
  align-items: center;
  gap: 1px;
  height: 28px;
}
.construct svg {
  width: 16px;
  height: 16px;
  color: #aaa;
  stroke: #aaa;
}
.construct p {
  margin-top: 8px;
  text-align: center;
}
.side-tabs {
  width: 22px;
  padding-top: 2px;
  background: #fbfbfb;
}
.side-tabs button {
  width: 20px;
  display: flex;
  flex-direction: column;
  align-items: center;
  gap: 4px;
  padding: 3px 2px;
  margin: 0 0 13px 2px;
  border: 1px solid #999;
  border-right: 0;
  border-radius: 4px 0 0 4px;
  background: #f0f0f0;
  color: #555;
}
.side-tabs svg {
  width: 16px;
  height: 16px;
}
.side-tabs span {
  writing-mode: vertical-rl;
  text-orientation: sideways;
}
.side-tabs .latin {
  font: 10px/14px "Liberation Mono", monospace;
}

/* 状态栏 */
.status {
  display: flex;
  justify-content: flex-end;
  height: 21px;
  padding-top: 3px;
  border-top: 1px solid #fafafa;
}
.coords {
  width: 282px;
}

/* 任务栏 */
.taskbar {
  position: relative;
  display: flex;
  height: 50px;
  flex: none;
  background: linear-gradient(90deg, #05151e, #03232f 40%, #042634);
}
.sys, .apps button {
  display: grid;
  place-items: center;
}
.sys {
  width: 60px;
}
.sys svg {
  width: 20px;
  height: 20px;
}
.apps {
  display: flex;
  padding-left: 3px;
}
.apps button {
  width: 62px;
}
.apps svg {
  width: 30px;
  height: 30px;
}
.open {
  background: linear-gradient(#76b9ed, #76b9ed) center bottom / 51px 3px no-repeat;
}
.active {
  background-color: #374f5a;
  background-size: 100% 3px;
}
.w {
  font: bold 14px "Liberation Sans", sans-serif;
  fill: #fff;
}
.a {
  font: bold 28px "Liberation Sans", sans-serif;
  fill: #b62027;
}
.tray {
  display: flex;
  align-items: center;
  margin-left: auto;
  color: #fff;
}
.tray svg {
  stroke: #fff;
  stroke-width: 1.5;
}
.ime {
  width: 19px;
  height: 19px;
  margin: 0 48px 4px 0;
  background: #fff;
  color: #000;
  font-size: 18px;
  line-height: 19px;
  text-align: center;
}
.people {
  width: 20px;
  height: 20px;
  margin-right: 26px;
}
.up {
  width: 18px;
  height: 10px;
  margin-right: 10px;
}
.vol {
  width: 22px;
  height: 18px;
  margin-right: 12px;
}
.wifi {
  width: 18px;
  height: 18px;
  margin-right: 12px;
}
.clock {
  display: flex;
  flex-direction: column;
  width: 76px;
  gap: 3px;
  padding-bottom: 2px;
  font-size: 15px;
  line-height: 20px;
  text-align: center;
}
.note {
  width: 22px;
  height: 22px;
  margin: 0 24px 0 23px;
}
.peek {
  width: 6px;
  height: 50px;
  border-left: 1px solid #56707b;
}
.watermark {
  position: absolute;
  right: 10px;
  top: 19px;
  color: rgba(255, 255, 255, .65);
  font-size: 15px;
  line-height: 22px;
}

/* 添加数据 */
.overlay {
  position: absolute;
  inset: 0 0 50px;
  display: grid;
  place-items: center;
  pointer-events: none;
}
.dialog {
  width: 574px;
  pointer-events: auto;
  border: 1px solid #1883d7;
  background: #f0f0f0;
  box-shadow: 0 4px 14px rgba(0, 0, 0, .35);
  font-size: 15px;
  line-height: 20px;
}
.dialog header {
  display: flex;
  align-items: center;
  justify-content: space-between;
  height: 31px;
  padding: 0 15px 2px 3px;
  background: #fff;
}
.dialog header svg {
  width: 12px;
  height: 12px;
  stroke: #000;
}
.look {
  display: flex;
  align-items: center;
  height: 35px;
  padding-left: 5px;
}
.look label {
  width: 67px;
}
.path, .type {
  border: 1px solid #adadad;
  background: #e1e1e1;
}
.path {
  width: 228px;
  height: 25px;
  margin-right: 5px;
}
.path select {
  padding-left: 4px;
  font-size: 12px;
}
.folder {
  width: 16px;
  height: 14px;
  margin-left: 3px;
}
.dtool {
  width: 23px;
  height: 22px;
  flex: none;
  display: flex;
  align-items: center;
  justify-content: center;
}
.dtool > svg:first-child {
  width: 16px;
  height: 16px;
}
.wide {
  width: 45px;
}
.wide .drop {
  width: 12px;
  height: 12px;
  margin: 0 0 0 5px;
}
.look .sep {
  width: 7px;
  height: 20px;
}
.files {
  height: 231px;
  margin: 6px 7px 0 5px;
  border: 2px solid #696969;
  border-right-color: #e3e3e3;
  border-bottom-color: #e3e3e3;
  background: #fff;
  list-style: none;
}
.files li {
  display: flex;
  height: 21px;
}
.files svg {
  width: 16px;
  height: 16px;
}
.files span {
  padding: 0 2px;
  font-size: 15px;
  line-height: 21px;
}
.selected span {
  background: #0078d7;
  color: #fff;
  outline: 1px dotted #d9843c;
  outline-offset: -1px;
}
.fields {
  display: grid;
  grid-template-columns: 91px 1fr 86px;
  grid-auto-rows: 26px;
  row-gap: 8px;
  padding: 14px 12px 26px;
}
.fields label {
  line-height: 16px;
}
.fields input, .type {
  height: 24px;
  margin: 1px 31px 0 0;
}
.fields input {
  padding: 0 4px 2px;
  border: 1px solid #7a7a7a;
  background: #fff;
}
.type select {
  padding: 0 0 2px 3px;
}
.btn {
  padding-bottom: 2px;
  border: 1px solid #adadad;
  background: #e1e1e1;
}
.primary {
  border: 2px solid #0078d7;
}
```
